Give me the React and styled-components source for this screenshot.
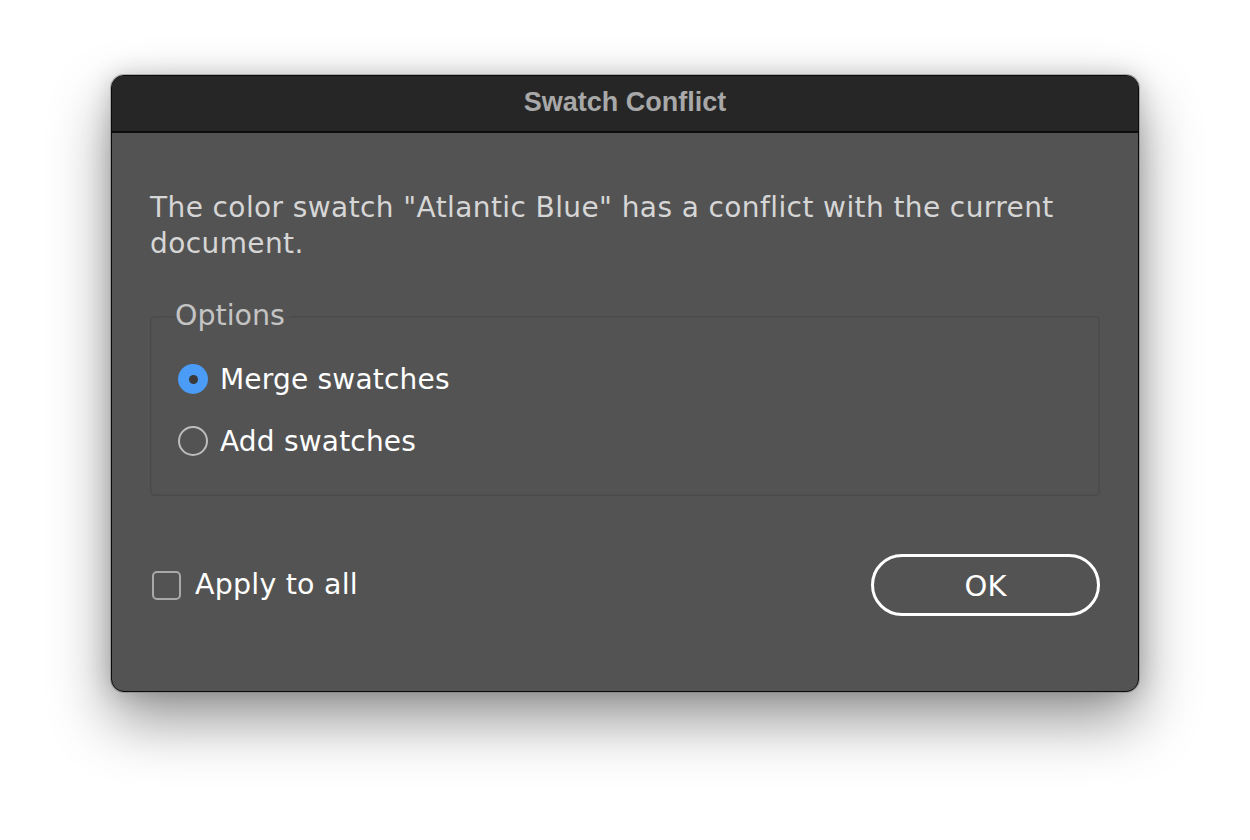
import React from "react";
import styled, { createGlobalStyle } from "styled-components";

const Global = createGlobalStyle`
  html, body { margin: 0; padding: 0; background: #ffffff; }
  body { font-family: "DejaVu Sans", "Noto Sans", sans-serif; }
`;

const Page = styled.div`
  width: 1250px;
  height: 840px;
  display: flex;
  justify-content: center;
  align-items: flex-start;
  padding-top: 75px;
  box-sizing: border-box;
`;

const Window = styled.div`
  width: 1028px;
  height: 617px;
  box-sizing: border-box;
  background: #535353;
  border: 1px solid #0a0a0a;
  border-radius: 13px;
  overflow: hidden;
  box-shadow: 0 0 0 1px rgba(130, 130, 130, 0.55), 0 28px 60px rgba(0, 0, 0, 0.42),
    0 0 24px rgba(0, 0, 0, 0.18);
  display: flex;
  flex-direction: column;
`;

const TitleBar = styled.div`
  height: 57px;
  flex: none;
  box-sizing: border-box;
  background: #262626;
  border-bottom: 2px solid #0d0d0d;
  display: flex;
  align-items: center;
  justify-content: center;
  font-family: "Liberation Sans", Arial, sans-serif;
  font-weight: bold;
  font-size: 27px;
  color: #a8a8a8;
  padding-bottom: 2px;
`;

const Body = styled.div`
  flex: 1;
  padding: 57px 38px 0 38px;
  display: flex;
  flex-direction: column;
`;

const Message = styled.p`
  margin: 0;
  font-size: 28px;
  line-height: 36px;
  color: #d6d6d6;
  letter-spacing: 0.4px;
`;

const Group = styled.fieldset`
  margin: 39px 0 0 0;
  padding: 0 0 34px 27px;
  border: 1px solid #4a4a4a;
  border-radius: 4px;
  box-shadow: inset 0 0 2px rgba(0, 0, 0, 0.15);
  display: flex;
  flex-direction: column;
  gap: 22px;
`;

const Legend = styled.legend`
  margin-left: -3px;
  padding: 0 6px 0 0;
  font-size: 28.5px;
  line-height: 30px;
  color: #c4c4c4;
  margin-bottom: 28px;
`;

const OptionRow = styled.label`
  display: flex;
  align-items: center;
  gap: 12px;
  height: 40px;
  font-size: 28px;
  color: #ffffff;
  letter-spacing: 0.2px;
`;

const Radio = styled.span`
  width: 30px;
  height: 30px;
  flex: none;
  box-sizing: border-box;
  border-radius: 50%;
  display: flex;
  align-items: center;
  justify-content: center;
  background: ${(p) => (p.$checked ? "#4a9cf6" : "transparent")};
  border: ${(p) => (p.$checked ? "none" : "2px solid #bdbdbd")};
  &::after {
    content: "";
    width: 9px;
    height: 9px;
    border-radius: 50%;
    background: #3a3a3a;
    display: ${(p) => (p.$checked ? "block" : "none")};
  }
`;

const Footer = styled.div`
  margin-top: 58px;
  display: flex;
  align-items: center;
  justify-content: space-between;
`;

const CheckRow = styled.label`
  display: flex;
  align-items: center;
  gap: 14px;
  padding-left: 2px;
  font-size: 28.5px;
  line-height: 36px;
  color: #ffffff;
  letter-spacing: 0.2px;
`;

const CheckBox = styled.span`
  width: 29px;
  height: 29px;
  box-sizing: border-box;
  border: 2px solid #a9a9a9;
  border-radius: 5px;
  flex: none;
`;

const OkButton = styled.button`
  width: 229px;
  height: 62px;
  box-sizing: border-box;
  border: 3px solid #ffffff;
  border-radius: 31px;
  background: transparent;
  color: #ffffff;
  font-family: "DejaVu Sans", sans-serif;
  font-size: 29px;
  padding: 2px 0 0 0;
`;

export default function App() {
  return (
    <>
      <Global />
      <Page>
        <Window>
          <TitleBar>Swatch Conflict</TitleBar>
          <Body>
            <Message>
              The color swatch "Atlantic Blue" has a conflict with the current
              <br />
              document.
            </Message>
            <Group>
              <Legend>Options</Legend>
              <OptionRow>
                <Radio $checked />
                Merge swatches
              </OptionRow>
              <OptionRow>
                <Radio />
                Add swatches
              </OptionRow>
            </Group>
            <Footer>
              <CheckRow>
                <CheckBox />
                Apply to all
              </CheckRow>
              <OkButton>OK</OkButton>
            </Footer>
          </Body>
        </Window>
      </Page>
    </>
  );
}
